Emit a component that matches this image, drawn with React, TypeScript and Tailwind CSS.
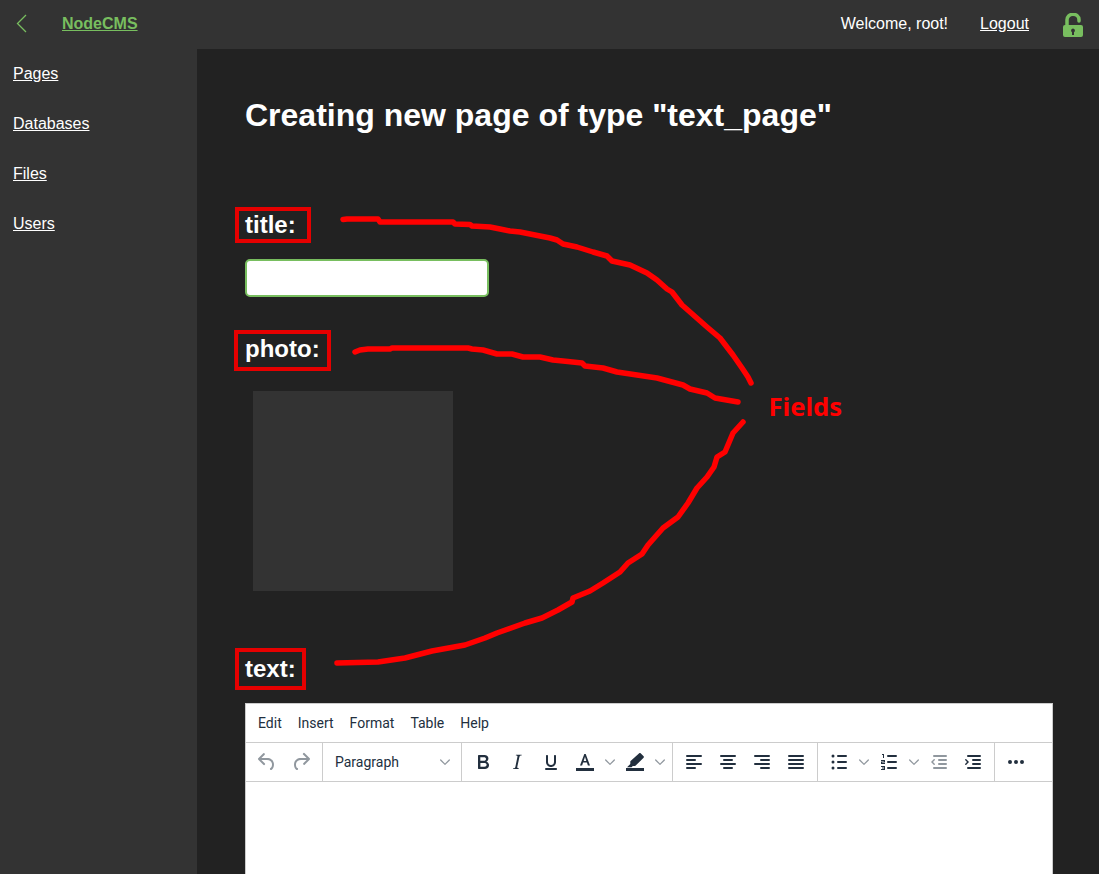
import { ReactNode } from "react";

const Icon = ({ d, muted }: { d: string; muted?: boolean }) => (
  <svg width="24" height="24" viewBox="0 0 24 24" className={muted ? "fill-[#222f3e]/50" : "fill-[#222f3e]"}>
    <path d={d} fillRule="evenodd" />
  </svg>
);

const Btn = ({ children }: { children: ReactNode }) => (
  <div className="flex h-[34px] w-[34px] items-center justify-center">{children}</div>
);

const Chevron = () => (
  <div className="flex h-[34px] w-4 items-center justify-center">
    <svg width="10" height="6" viewBox="0 0 10 6" className="fill-[#222f3e]/50">
      <path d="M5 4.6 8.9.6a.6.6 0 0 1 .9.8L5.4 5.8a.6.6 0 0 1-.8 0L.2 1.4A.6.6 0 0 1 1.1.6z" />
    </svg>
  </div>
);

const Group = ({ children, last }: { children: ReactNode; last?: boolean }) => (
  <div className={`flex h-full items-center px-1 ${last ? "" : "border-r border-[#cccccc]"}`}>{children}</div>
);

const undo =
  "M6.4 8H12c3.7 0 6.2 2 6.8 5.1.6 2.7-.4 5.6-2.3 6.8a1 1 0 0 1-1-1.8c1.1-.6 1.8-2.7 1.4-4.6-.5-2.1-2.1-3.5-4.9-3.5H6.4l3.3 3.3a1 1 0 1 1-1.4 1.4l-5-5a1 1 0 0 1 0-1.4l5-5a1 1 0 0 1 1.4 1.4L6.4 8Z";
const redo =
  "M17.6 10H12c-2.8 0-4.4 1.4-4.9 3.5-.4 2 .3 4 1.4 4.6a1 1 0 1 1-1 1.8c-2-1.2-2.9-4.1-2.3-6.8.6-3 3-5.1 6.8-5.1h5.6l-3.3-3.3a1 1 0 1 1 1.4-1.4l5 5a1 1 0 0 1 0 1.4l-5 5a1 1 0 0 1-1.4-1.4l3.3-3.3Z";
const bold =
  "M7.8 19c-.3 0-.5 0-.6-.2l-.2-.5V5.7c0-.2 0-.4.2-.5l.6-.2h5c1.5 0 2.7.3 3.5 1 .7.6 1.1 1.4 1.1 2.5a3 3 0 0 1-.6 1.9c-.4.6-1 1-1.6 1.2.4.1.9.3 1.3.6s.8.7 1 1.2c.4.4.5 1 .5 1.6 0 1.3-.4 2.3-1.3 3-.8.7-2.1 1-3.8 1H7.8Zm5-8.3c.6 0 1.2-.1 1.6-.5.4-.3.6-.7.6-1.3 0-1.1-.8-1.7-2.3-1.7H9.3v3.5h3.4Zm.5 6c.7 0 1.3-.1 1.7-.4.4-.4.6-.9.6-1.5s-.2-1-.7-1.4c-.4-.3-1-.4-2-.4H9.4v3.8h4Z";
const italic =
  "M16.7 4.7l-.1.9h-.3c-.6 0-1 0-1.4.3-.3.3-.4.6-.5 1.1l-2.1 9.8v.6c0 .5.4.8 1.4.8h.2l-.2.8H8l.2-.8h.2c1.1 0 1.8-.5 2-1.5l2-9.8.1-.5c0-.6-.4-.8-1.4-.8h-.3l.2-.9h5.8Z";
const underline =
  "M8 5c.6 0 1 .4 1 1v6c0 1.7 1.3 3 3 3s3-1.300 3-3V6c0-.6.4-1 1-1s1 .4 1 1v6c0 2.800-2.200 5-5 5s-5-2.200-5-5V6c0-.6.4-1 1-1ZM7 18h10c.6 0 1 .4 1 1s-.4 1-1 1H7a1 1 0 0 1 0-2Z";
const textColor = "M3 18h18v3H3zM12.700 4h-1.400L7 15.500h2.100l1-2.900h3.800l1 2.900H17L12.700 4Zm-2 7 1.300-4.200 1.300 4.200h-2.600Z";
const highlight =
  "M3 18h18v3H3zM17.600 3.300l3 3c.4.400.4 1 0 1.400l-7.900 7.900a1 1 0 0 1-.7.300H9.800l-1.300 1.300H4l3.300-3.300v-2.300c0-.3.100-.5.300-.7l8.600-7.600c.4-.3 1-.3 1.400 0Z";
const alignLeft = "M5 5h14a1 1 0 0 1 0 2H5a1 1 0 1 1 0-2Zm0 4h8a1 1 0 0 1 0 2H5a1 1 0 1 1 0-2Zm0 8h8a1 1 0 0 1 0 2H5a1 1 0 0 1 0-2Zm0-4h14a1 1 0 0 1 0 2H5a1 1 0 0 1 0-2Z";
const alignCenter = "M5 5h14a1 1 0 0 1 0 2H5a1 1 0 1 1 0-2Zm3 4h8a1 1 0 0 1 0 2H8a1 1 0 1 1 0-2Zm0 8h8a1 1 0 0 1 0 2H8a1 1 0 0 1 0-2Zm-3-4h14a1 1 0 0 1 0 2H5a1 1 0 0 1 0-2Z";
const alignRight = "M5 5h14a1 1 0 0 1 0 2H5a1 1 0 1 1 0-2Zm6 4h8a1 1 0 0 1 0 2h-8a1 1 0 0 1 0-2Zm0 8h8a1 1 0 0 1 0 2h-8a1 1 0 0 1 0-2Zm-6-4h14a1 1 0 0 1 0 2H5a1 1 0 0 1 0-2Z";
const alignJustify = "M5 5h14a1 1 0 0 1 0 2H5a1 1 0 1 1 0-2Zm0 4h14a1 1 0 0 1 0 2H5a1 1 0 1 1 0-2Zm0 4h14a1 1 0 0 1 0 2H5a1 1 0 0 1 0-2Zm0 4h14a1 1 0 0 1 0 2H5a1 1 0 0 1 0-2Z";
const bullets =
  "M11 5h8a1 1 0 0 1 0 2h-8a1 1 0 0 1 0-2Zm0 6h8a1 1 0 0 1 0 2h-8a1 1 0 0 1 0-2Zm0 6h8a1 1 0 0 1 0 2h-8a1 1 0 0 1 0-2ZM4.500 6a1.500 1.500 0 1 1 3 0 1.500 1.500 0 0 1-3 0Zm0 6a1.500 1.500 0 1 1 3 0 1.500 1.500 0 0 1-3 0Zm0 6a1.500 1.500 0 1 1 3 0 1.500 1.500 0 0 1-3 0Z";
const numbers =
  "M11 5h8a1 1 0 0 1 0 2h-8a1 1 0 0 1 0-2Zm0 6h8a1 1 0 0 1 0 2h-8a1 1 0 0 1 0-2Zm0 6h8a1 1 0 0 1 0 2h-8a1 1 0 0 1 0-2ZM5 4h2v4H6V5H5Zm-1 6h4v2.500H5.200v.5H8v1H4v-2.500h2.800V11H4Zm0 6h4v4H4v-1h3v-.5H5v-1h2V17H4Z";
const outdent =
  "M7 5h12a1 1 0 0 1 0 2H7a1 1 0 1 1 0-2Zm5 4h7a1 1 0 0 1 0 2h-7a1 1 0 0 1 0-2Zm0 4h7a1 1 0 0 1 0 2h-7a1 1 0 0 1 0-2Zm-5 4h12a1 1 0 0 1 0 2H7a1 1 0 0 1 0-2Zm-.300-7.700L4 12l2.700 2.700a.7.700 0 0 0 1-1L6 12l1.700-1.700a.7.700 0 0 0-1-1Z";
const indent =
  "M7 5h12a1 1 0 0 1 0 2H7a1 1 0 1 1 0-2Zm5 4h7a1 1 0 0 1 0 2h-7a1 1 0 0 1 0-2Zm0 4h7a1 1 0 0 1 0 2h-7a1 1 0 0 1 0-2Zm-5 4h12a1 1 0 0 1 0 2H7a1 1 0 0 1 0-2ZM5.300 9.300 8 12l-2.700 2.700a.7.700 0 0 1-1-1L6 12 4.300 10.300a.7.700 0 0 1 1-1Z";
const more =
  "M6 10a2 2 0 1 1 0 4 2 2 0 0 1 0-4Zm12 0a2 2 0 1 1 0 4 2 2 0 0 1 0-4Zm-6 0a2 2 0 1 1 0 4 2 2 0 0 1 0-4Z";

const Editor = () => (
  <div className="h-[180px] w-[808px] border border-[#cccccc] bg-white font-['Roboto',sans-serif] text-sm text-[#222f3e]">
    <div className="flex h-[39px] items-center border-b border-[#cccccc] px-1">
      {["Edit", "Insert", "Format", "Table", "Help"].map((m) => (
        <span key={m} className="px-2">
          {m}
        </span>
      ))}
    </div>
    <div className="flex h-[39px] items-center border-b border-[#cccccc]">
      <Group>
        <Btn><Icon d={undo} muted /></Btn>
        <Btn><Icon d={redo} muted /></Btn>
      </Group>
      <Group>
        <div className="flex w-[130px] items-center justify-between pl-2 pr-1">
          <span>Paragraph</span>
          <Chevron />
        </div>
      </Group>
      <Group>
        <Btn><Icon d={bold} /></Btn>
        <Btn><Icon d={italic} /></Btn>
        <Btn><Icon d={underline} /></Btn>
        <Btn><Icon d={textColor} /></Btn>
        <Chevron />
        <Btn><Icon d={highlight} /></Btn>
        <Chevron />
      </Group>
      <Group>
        <Btn><Icon d={alignLeft} /></Btn>
        <Btn><Icon d={alignCenter} /></Btn>
        <Btn><Icon d={alignRight} /></Btn>
        <Btn><Icon d={alignJustify} /></Btn>
      </Group>
      <Group>
        <Btn><Icon d={bullets} /></Btn>
        <Chevron />
        <Btn><Icon d={numbers} /></Btn>
        <Chevron />
        <Btn><Icon d={outdent} muted /></Btn>
        <Btn><Icon d={indent} /></Btn>
      </Group>
      <Group last>
        <Btn><Icon d={more} /></Btn>
      </Group>
    </div>
  </div>
);

// hand drawn strokes over the form
const Annotations = () => (
  <svg className="pointer-events-none absolute left-0 top-0" width="1099" height="874" fill="none" stroke="#ff0000" strokeWidth="5.500" strokeLinecap="round" strokeLinejoin="round">
    <path d="M343 219.500 L347 219 L378 219 L380 222 L453 222 L455 224 L470 224.500 L472 226 L490 227 L500 229 L510 231 L520 232 L530 234 L540 236 L550 238 L557 240 L563 244 L577 247 L593 252 L607 256 L612 261 L630 265 L647 273 L657 280 L667 289 L672 292 L682 305 L690 312 L707 327 L720 338 L733 355 L742 368 L748 377 L751 383" />
    <path d="M355 352 L360 350 L368 349 L390 349 L392 348 L468 348 L472 349 L483 350 L497 354 L512 354 L523 357 L540 357 L553 360 L563 361 L582 363 L585 366 L603 368 L617 372 L637 375 L657 378 L683 385 L690 389 L707 393 L715 398 L738 402" />
    <path d="M743 422 L733 433 L725 452 L717 457 L714 467 L707 477 L697 488 L688 503 L678 517 L663 528 L648 545 L642 554 L628 563 L620 572 L603 583 L590 591 L573 598 L572 602 L558 610 L542 618 L525 623 L497 633 L485 638 L465 645 L432 651 L405 658 L378 662 L337 663" />
  </svg>
);

const Label = ({ text, box }: { text: string; box: string }) => (
  <div className="relative h-7 text-2xl font-bold leading-7 text-white">
    {text}:
    <div className={`absolute border-4 border-[#e60000] ${box}`} />
  </div>
);

export default function App() {
  return (
    <div className="relative flex h-[874px] flex-col overflow-hidden bg-[#222222] font-['Liberation_Sans',Arial,sans-serif] text-white">
      <header className="flex h-[49px] shrink-0 items-center bg-[#333333] pb-[2px]">
        <svg width="12" height="20" viewBox="0 0 12 20" fill="none" stroke="#78be5f" strokeWidth="1.300" className="ml-[16px]">
          <path d="M10 1 1.500 9.500 10 18" />
        </svg>
        <a href="#" className="ml-[34px] font-bold text-[#78be5f] underline">NodeCMS</a>
        <span className="ml-auto">Welcome, root!</span>
        <a href="#" className="ml-8 underline">Logout</a>
        <svg width="20" height="24" viewBox="0 0 20 24" className="ml-[34px] mr-[16px] mt-[2px]">
          <path d="M4 13V7a6 5.500 0 0 1 12-.5V8" fill="none" stroke="#78be5f" strokeWidth="3.500" strokeLinecap="round" />
          <path d="M2 12h16a2 2 0 0 1 2 2v8a2 2 0 0 1-2 2H2a2 2 0 0 1-2-2v-8a2 2 0 0 1 2-2Zm8 3.500a2 2 0 0 0-1 3.700V22h2v-2.800a2 2 0 0 0-1-3.700Z" fill="#78be5f" fillRule="evenodd" />
        </svg>
      </header>
      <div className="flex min-h-0 flex-1">
        <nav className="flex w-[197px] shrink-0 flex-col gap-[32px] bg-[#333333] pl-[13px] pt-4 leading-[18px]">
          <a href="#" className="underline">Pages</a>
          <a href="#" className="underline">Databases</a>
          <a href="#" className="underline">Files</a>
          <a href="#" className="underline">Users</a>
        </nav>
        <main className="flex-1 pl-12 pt-[48px]">
          <h1 className="text-[32px] font-bold leading-[37px]">Creating new page of type "text_page"</h1>
          <div className="mt-[77px]">
            <Label text="title" box="-left-[10px] -top-[4px] h-9 w-[76px]" />
          </div>
          <input className="mt-5 block h-[38px] w-[244px] rounded-[5px] border-2 border-[#78be5f] bg-white" />
          <div className="mt-[38px]">
            <Label text="photo" box="-left-[11px] -top-[5px] h-[41px] w-[97px]" />
          </div>
          <div className="ml-2 mt-[28px] h-[200px] w-[200px] bg-[#333333]" />
          <div className="mt-[64px]">
            <Label text="text" box="-left-[10px] -top-[7px] h-[42px] w-[71px]" />
          </div>
          <div className="mt-[20px]">
            <Editor />
          </div>
        </main>
      </div>
      <Annotations />
      <span className="absolute left-[768.5px] top-[391px] font-['Noto_Sans',sans-serif] text-[25.6px] font-bold leading-8 text-[#ff0000]">Fields</span>
    </div>
  );
}
